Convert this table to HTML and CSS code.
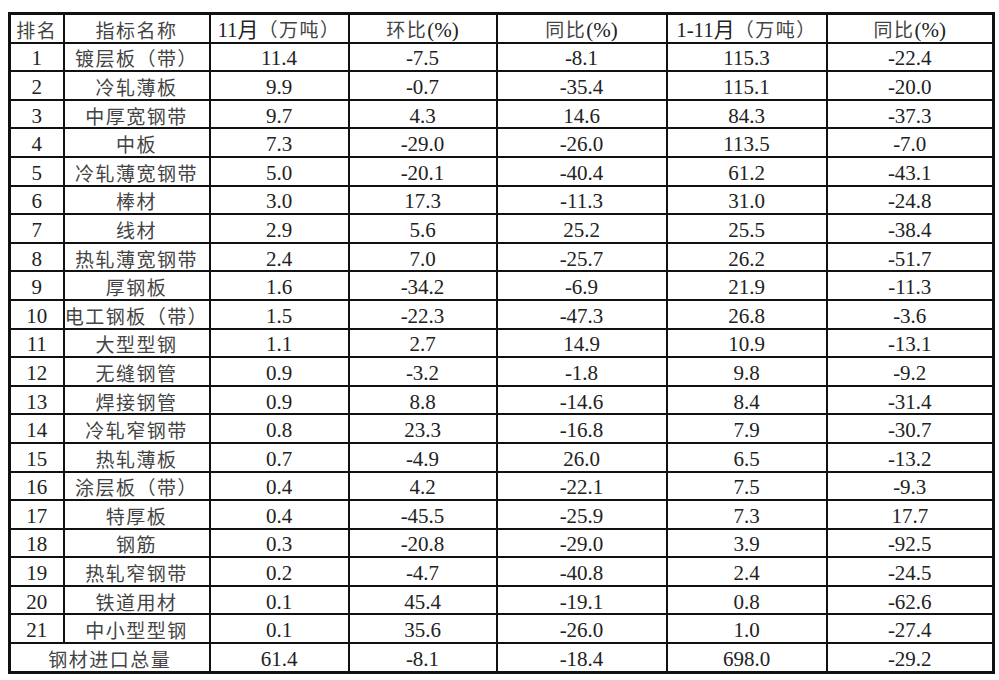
FILE: index.html
```html
<!DOCTYPE html>
<html lang="zh-CN">
<head>
    <meta charset="UTF-8">
    <title>钢材进口</title>
    <link rel="stylesheet" href="styles.css">
</head>
<body>
    <table class="steel">
        <colgroup>
            <col class="c-rank">
            <col class="c-name">
            <col class="c-month">
            <col class="c-mom">
            <col class="c-yoy">
            <col class="c-total">
            <col class="c-yoy2">
        </colgroup>
        <thead>
            <tr>
                <th class="cn">排名</th>
                <th class="cn">指标名称</th>
                <th>11月<span class="cn">（万吨）</span></th>
                <th><span class="cn">环比</span>(%)</th>
                <th><span class="cn">同比</span>(%)</th>
                <th>1-11月<span class="cn">（万吨）</span></th>
                <th><span class="cn">同比</span>(%)</th>
            </tr>
        </thead>
        <tbody>
            <tr><td>1</td><td class="cn">镀层板（带）</td><td>11.4</td><td>-7.5</td><td>-8.1</td><td>115.3</td><td>-22.4</td></tr>
            <tr><td>2</td><td class="cn">冷轧薄板</td><td>9.9</td><td>-0.7</td><td>-35.4</td><td>115.1</td><td>-20.0</td></tr>
            <tr><td>3</td><td class="cn">中厚宽钢带</td><td>9.7</td><td>4.3</td><td>14.6</td><td>84.3</td><td>-37.3</td></tr>
            <tr><td>4</td><td class="cn">中板</td><td>7.3</td><td>-29.0</td><td>-26.0</td><td>113.5</td><td>-7.0</td></tr>
            <tr><td>5</td><td class="cn">冷轧薄宽钢带</td><td>5.0</td><td>-20.1</td><td>-40.4</td><td>61.2</td><td>-43.1</td></tr>
            <tr><td>6</td><td class="cn">棒材</td><td>3.0</td><td>17.3</td><td>-11.3</td><td>31.0</td><td>-24.8</td></tr>
            <tr><td>7</td><td class="cn">线材</td><td>2.9</td><td>5.6</td><td>25.2</td><td>25.5</td><td>-38.4</td></tr>
            <tr><td>8</td><td class="cn">热轧薄宽钢带</td><td>2.4</td><td>7.0</td><td>-25.7</td><td>26.2</td><td>-51.7</td></tr>
            <tr><td>9</td><td class="cn">厚钢板</td><td>1.6</td><td>-34.2</td><td>-6.9</td><td>21.9</td><td>-11.3</td></tr>
            <tr><td>10</td><td class="cn">电工钢板（带）</td><td>1.5</td><td>-22.3</td><td>-47.3</td><td>26.8</td><td>-3.6</td></tr>
            <tr><td>11</td><td class="cn">大型型钢</td><td>1.1</td><td>2.7</td><td>14.9</td><td>10.9</td><td>-13.1</td></tr>
            <tr><td>12</td><td class="cn">无缝钢管</td><td>0.9</td><td>-3.2</td><td>-1.8</td><td>9.8</td><td>-9.2</td></tr>
            <tr><td>13</td><td class="cn">焊接钢管</td><td>0.9</td><td>8.8</td><td>-14.6</td><td>8.4</td><td>-31.4</td></tr>
            <tr><td>14</td><td class="cn">冷轧窄钢带</td><td>0.8</td><td>23.3</td><td>-16.8</td><td>7.9</td><td>-30.7</td></tr>
            <tr><td>15</td><td class="cn">热轧薄板</td><td>0.7</td><td>-4.9</td><td>26.0</td><td>6.5</td><td>-13.2</td></tr>
            <tr><td>16</td><td class="cn">涂层板（带）</td><td>0.4</td><td>4.2</td><td>-22.1</td><td>7.5</td><td>-9.3</td></tr>
            <tr><td>17</td><td class="cn">特厚板</td><td>0.4</td><td>-45.5</td><td>-25.9</td><td>7.3</td><td>17.7</td></tr>
            <tr><td>18</td><td class="cn">钢筋</td><td>0.3</td><td>-20.8</td><td>-29.0</td><td>3.9</td><td>-92.5</td></tr>
            <tr><td>19</td><td class="cn">热轧窄钢带</td><td>0.2</td><td>-4.7</td><td>-40.8</td><td>2.4</td><td>-24.5</td></tr>
            <tr><td>20</td><td class="cn">铁道用材</td><td>0.1</td><td>45.4</td><td>-19.1</td><td>0.8</td><td>-62.6</td></tr>
            <tr><td>21</td><td class="cn">中小型型钢</td><td>0.1</td><td>35.6</td><td>-26.0</td><td>1.0</td><td>-27.4</td></tr>
            <tr><td colspan="2" class="cn">钢材进口总量</td><td>61.4</td><td>-8.1</td><td>-18.4</td><td>698.0</td><td>-29.2</td></tr>
        </tbody>
    </table>
</body>
</html>
```

FILE: styles.css
```css
body {
    margin: 0;
    background: #fff;
    font-family: "Liberation Serif", "Noto Sans CJK SC", serif;
    color: #222;
}
.steel {
    margin: 12px 0 0 8px;
    width: 984px;
    table-layout: fixed;
    border-collapse: collapse;
    border: 3px solid #111;
}
.steel th, .steel td {
    border: 2px solid #111;
    padding: 3px 0 0 0;
    height: 23.6px;
    font-size: 21px;
    font-weight: normal;
    line-height: 22px;
    text-align: center;
    white-space: nowrap;
    overflow: visible;
}
.steel .cn {
    font-family: "Noto Sans CJK SC", sans-serif;
    font-size: 19px;
    letter-spacing: 1.5px;
    color: #444;
}
.c-rank { width: 54px; }
.c-name { width: 146px; }
.c-month { width: 139px; }
.c-mom { width: 148px; }
.c-yoy { width: 170px; }
.c-total { width: 160px; }
.c-yoy2 { width: 167px; }
```
